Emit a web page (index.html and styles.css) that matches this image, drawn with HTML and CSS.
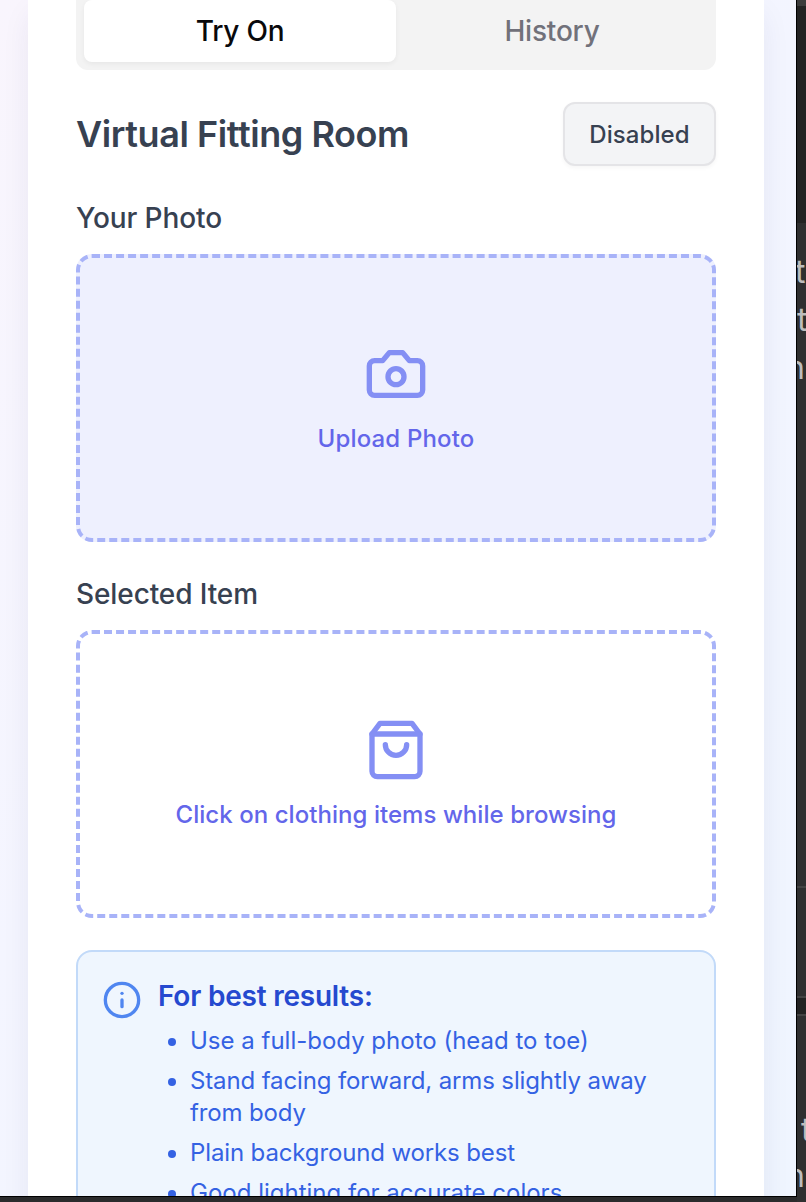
FILE: index.html
```html
<!DOCTYPE html>
<html lang="en">
<head>
<meta charset="utf-8">
<title>Virtual Fitting Room</title>
<link rel="stylesheet" href="styles.css">
</head>
<body>
<div class="desktop">
  <main class="popup">
    <section class="card">
      <nav class="tabs">
        <button class="tab tab-active">Try On</button>
        <button class="tab">History</button>
      </nav>
      <header class="heading">
        <h1 class="title">Virtual Fitting Room</h1>
        <button class="toggle">Disabled</button>
      </header>
      <h2 class="label label-photo">Your Photo</h2>
      <div class="drop drop-filled">
        <svg class="drop-icon" viewBox="0 0 24 24"><path d="M14.5 4h-5L7 7H4a2 2 0 0 0-2 2v9a2 2 0 0 0 2 2h16a2 2 0 0 0 2-2V9a2 2 0 0 0-2-2h-3l-2.5-3z"/><circle cx="12" cy="13" r="3"/></svg>
        <span class="drop-text upload-text">Upload Photo</span>
      </div>
      <h2 class="label label-item">Selected Item</h2>
      <div class="drop">
        <svg class="drop-icon" viewBox="0 0 24 24"><path d="M6 2 3 6v14a2 2 0 0 0 2 2h14a2 2 0 0 0 2-2V6l-3-4Z"/><path d="M3 6h18"/><path d="M16 10a4 4 0 0 1-8 0"/></svg>
        <span class="drop-text">Click on clothing items while browsing</span>
      </div>
      <aside class="tips">
        <svg class="tips-icon" viewBox="0 0 24 24"><circle cx="12" cy="12" r="10"/><path d="M12 16v-4"/><path d="M12 8h.01"/></svg>
        <div class="tips-body">
          <h3 class="tips-title">For best results:</h3>
          <ul class="tips-list">
            <li>Use a full-body photo (head to toe)</li>
            <li class="snug">Stand facing forward, arms slightly away from body</li>
            <li class="snug">Plain background works best</li>
            <li>Good lighting for accurate colors</li>
          </ul>
        </div>
      </aside>
    </section>
  </main>
  <div class="behind">
    <div class="pane pane-top"></div>
    <div class="pane pane-header"></div>
    <div class="pane pane-text"><span class="far-letter first">t</span><span class="far-letter second">t</span><span class="far-letter third">n</span></div>
    <div class="pane pane-mid"></div>
    <div class="pane pane-gap"></div>
    <div class="pane pane-bottom"><span class="far-letter fourth">t</span><span class="far-letter fifth">n</span></div>
  </div>
</div>
</body>
</html>
```
FILE: styles.css
```css
* { box-sizing: border-box; }
body {
  margin: 0;
  font-family: Inter, "Liberation Sans", sans-serif;
  background: #2b2b2c;
}
h1, h2, h3, ul { margin: 0; padding: 0; }
button { font: inherit; border: 0; padding: 0; }
.desktop {
  display: flex;
  width: 806px;
  height: 1202px;
  overflow: hidden;
  background: #2b2b2c;
}
.popup {
  width: 797px;
  height: 1197px;
  flex: none;
  padding: 0 32px 0 28px;
  overflow: hidden;
  border-right: 1px solid #000;
  border-bottom: 1px solid #000;
  background: linear-gradient(to bottom right, #f9f5fd, #f4f5ff 40%, #eff5ff);
}
.card {
  width: 736px;
  height: 1300px;
  padding: 0 48px;
  background: #fff;
  box-shadow: 0 10px 30px -6px rgba(40, 40, 90, .1);
}
.tabs {
  display: flex;
  height: 70px;
  padding: 0 8px 8px;
  border-radius: 0 0 12px 12px;
  background: #f3f3f3;
}
.tab {
  flex: 1;
  height: 62px;
  padding-bottom: 1px;
  font-size: 28px;
  font-weight: 500;
  letter-spacing: -.2px;
  color: #71717a;
  background: none;
}
.tab-active {
  color: #09090b;
  background: #fff;
  border-radius: 8px;
  box-shadow: 0 2px 5px rgba(0, 0, 0, .05);
}
.heading {
  display: flex;
  justify-content: space-between;
  align-items: center;
  height: 64px;
  margin-top: 32px;
}
.title {
  font-size: 36px;
  font-weight: 600;
  letter-spacing: -.43px;
  color: #374151;
}
.toggle {
  width: 153px;
  height: 64px;
  border: 2px solid #e4e4e7;
  border-radius: 12px;
  background: #f3f4f6;
  box-shadow: 0 2px 4px rgba(0, 0, 0, .04);
  color: #374151;
  font-size: 24px;
  font-weight: 500;
  letter-spacing: .1px;
}
.label {
  height: 40px;
  line-height: 41px;
  font-size: 28px;
  font-weight: 500;
  letter-spacing: -.1px;
  color: #374151;
}
.label-photo, .label-item { margin: 32px 0 16px; }
.drop {
  display: flex;
  flex-direction: column;
  align-items: center;
  height: 288px;
  padding-top: 84px;
  border: 4px dashed #a8b3f8;
  border-radius: 16px;
}
.drop-filled { background: #eef0fe; }
.drop-icon {
  width: 64px;
  height: 64px;
  margin-bottom: 17px;
  fill: none;
  stroke: #848ff4;
  stroke-width: 2;
  stroke-linecap: round;
  stroke-linejoin: round;
}
.drop-text {
  line-height: 32px;
  font-size: 24px;
  font-weight: 500;
  letter-spacing: .05px;
  color: #6366ea;
}
.upload-text { letter-spacing: .15px; }
.tips {
  display: flex;
  gap: 16px;
  height: 340px;
  margin-top: 32px;
  padding: 24px;
  border: 2px solid #c2daf9;
  border-radius: 16px;
  background: #eff6fe;
}
.tips-icon {
  flex: none;
  width: 40px;
  height: 40px;
  margin-top: 4px;
  fill: none;
  stroke: #4f86f0;
  stroke-width: 2;
  stroke-linecap: round;
  stroke-linejoin: round;
}
.tips-title {
  height: 40px;
  line-height: 41px;
  font-size: 28px;
  font-weight: 600;
  letter-spacing: -.22px;
  color: #2549cf;
}
.tips-list {
  display: grid;
  gap: 8px;
  margin-top: 9px;
  padding-left: 32px;
  font-size: 24px;
  line-height: 32px;
  color: #3462e3;
}
.snug { letter-spacing: -.13px; }
.behind {
  display: flex;
  flex-direction: column;
  width: 9px;
  overflow: hidden;
  color: #bdbdbd;
  font-size: 32px;
  line-height: 48px;
}
.pane { flex: none; background: #2f2f30; }
.pane-top { height: 6px; background: #3c3c3c; }
.pane-header { height: 217px; background: #232323; }
.pane-text { display: flex; flex-direction: column; height: 663px; padding-top: 25px; }
.pane-mid { height: 110px; border-top: 2px solid #434343; }
.pane-gap { height: 18px; border-top: 2px solid #434343; background: #222; }
.pane-bottom { display: flex; flex-direction: column; height: 188px; padding-top: 90px; border-top: 2px solid #434343; }
.far-letter { display: block; height: 48px; }
.first { margin-left: -2px; }
.third, .fifth { margin-left: -11px; }
.fourth { height: 46px; margin-left: 4px; }
```
